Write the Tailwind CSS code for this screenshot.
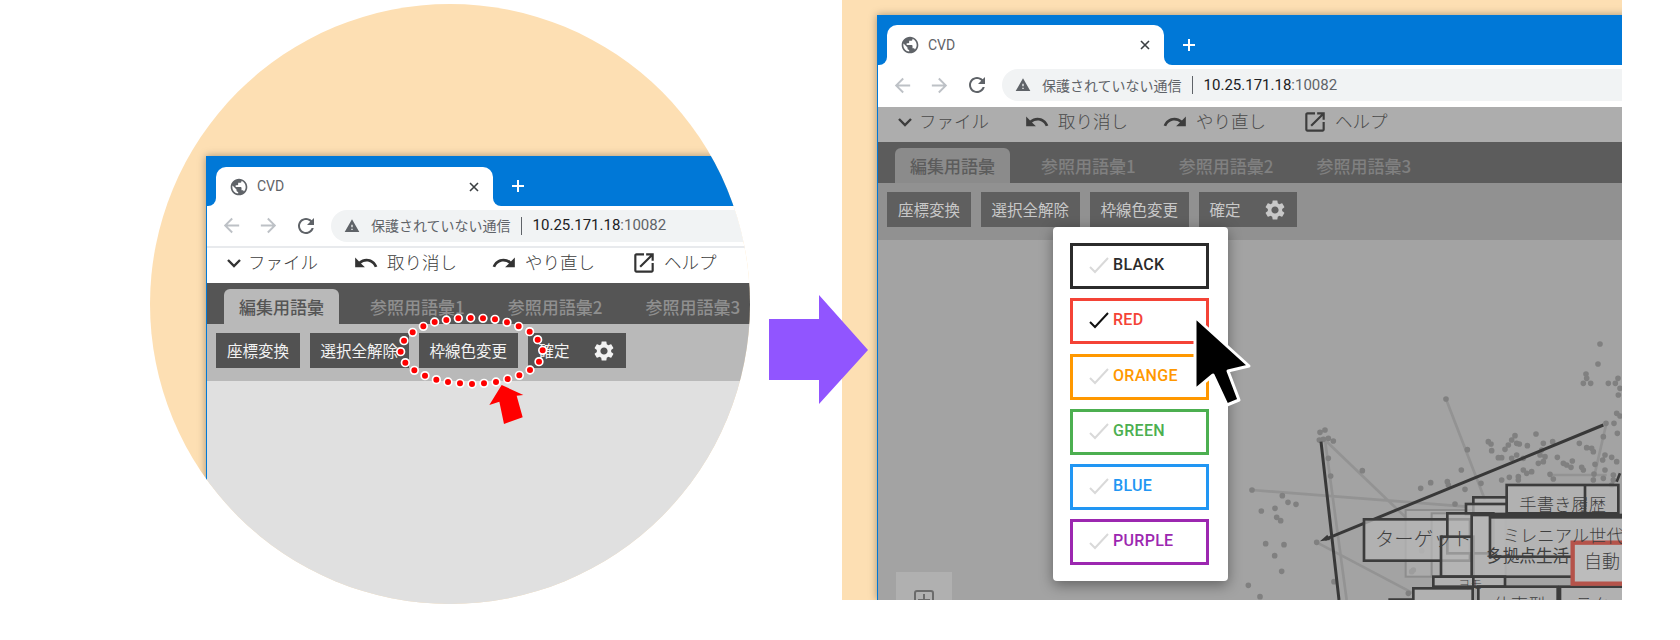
<!DOCTYPE html>
<html lang="ja">
<head>
<meta charset="UTF-8">
<title>CVD</title>
<script src="https://cdn.jsdelivr.net/npm/@tailwindcss/browser@4"></script>
</head>
<body class="bg-white">
<svg class="hidden">
  <symbol id="i-globe" viewBox="0 0 24 24"><path d="M12 2C6.48 2 2 6.48 2 12s4.48 10 10 10 10-4.48 10-10S17.52 2 12 2zm-1 17.93c-3.95-.49-7-3.85-7-7.93 0-.62.08-1.21.21-1.79L9 15v1c0 1.1.9 2 2 2v1.93zm6.9-2.54c-.26-.81-1-1.39-1.9-1.39h-1v-3c0-.55-.45-1-1-1H8v-2h2c.55 0 1-.45 1-1V7h2c1.1 0 2-.9 2-2v-.41c2.93 1.19 5 4.06 5 7.41 0 2.08-.8 3.97-2.1 5.39z"/></symbol>
  <symbol id="i-back" viewBox="0 0 24 24"><path d="M20 11H7.83l5.59-5.59L12 4l-8 8 8 8 1.41-1.41L7.83 13H20v-2z"/></symbol>
  <symbol id="i-forward" viewBox="0 0 24 24"><path d="M12 4l-1.41 1.41L16.17 11H4v2h12.17l-5.58 5.59L12 20l8-8z"/></symbol>
  <symbol id="i-reload" viewBox="0 0 24 24"><path d="M17.65 6.35C16.2 4.9 14.21 4 12 4c-4.42 0-7.99 3.58-7.99 8s3.57 8 7.99 8c3.73 0 6.84-2.55 7.73-6h-2.08c-.82 2.33-3.04 4-5.65 4-3.31 0-6-2.69-6-6s2.69-6 6-6c1.66 0 3.14.69 4.22 1.78L13 11h7V4l-2.35 2.35z"/></symbol>
  <symbol id="i-warn" viewBox="0 0 24 24"><path d="M1 21h22L12 2 1 21zm12-3h-2v-2h2v2zm0-4h-2v-4h2v4z"/></symbol>
  <symbol id="i-undo" viewBox="0 0 24 24"><path d="M12.5 8c-2.65 0-5.05.99-6.9 2.6L2 7v9h9l-3.62-3.62c1.39-1.16 3.16-1.88 5.12-1.88 3.54 0 6.55 2.31 7.6 5.5l2.37-.78C21.08 11.03 17.15 8 12.5 8z"/></symbol>
  <symbol id="i-redo" viewBox="0 0 24 24"><path d="M18.4 10.6C16.55 8.99 14.15 8 11.5 8c-4.65 0-8.58 3.03-9.96 7.22L3.9 16c1.05-3.19 4.05-5.5 7.6-5.5 1.95 0 3.73.72 5.12 1.88L13 16h9V7l-3.6 3.6z"/></symbol>
  <symbol id="i-open" viewBox="0 0 24 24"><path d="M19 19H5V5h7V3H5c-1.11 0-2 .9-2 2v14c0 1.1.89 2 2 2h14c1.1 0 2-.9 2-2v-7h-2v7zM14 3v2h3.59l-9.83 9.83 1.41 1.41L19 6.41V10h2V3h-7z"/></symbol>
  <symbol id="i-gear" viewBox="0 0 24 24"><path d="M19.14 12.94c.04-.3.06-.61.06-.94 0-.32-.02-.64-.07-.94l2.03-1.58c.18-.14.23-.41.12-.61l-1.92-3.32c-.12-.22-.37-.29-.59-.22l-2.39.96c-.5-.38-1.03-.7-1.62-.94l-.36-2.54c-.04-.24-.24-.41-.48-.41h-3.84c-.24 0-.43.17-.47.41l-.36 2.54c-.59.24-1.13.57-1.62.94l-2.39-.96c-.22-.08-.47 0-.59.22L2.74 8.87c-.12.21-.08.47.12.61l2.03 1.58c-.05.3-.09.63-.09.94s.02.64.07.94l-2.03 1.58c-.18.14-.23.41-.12.61l1.92 3.32c.12.22.37.29.59.22l2.39-.96c.5.38 1.03.7 1.62.94l.36 2.54c.05.24.24.41.48.41h3.84c.24 0 .44-.17.47-.41l.36-2.54c.59-.24 1.13-.56 1.62-.94l2.39.96c.22.08.47 0 .59-.22l1.92-3.32c.12-.22.07-.47-.12-.61l-2.01-1.58zM12 15.6c-1.98 0-3.6-1.62-3.6-3.6s1.62-3.6 3.6-3.6 3.6 1.62 3.6 3.6-1.62 3.6-3.6 3.6z"/></symbol>
  <symbol id="i-check" viewBox="0 0 20 16"><path d="M1 10l5 5L19 1" fill="none" stroke="currentColor" stroke-width="2"/></symbol>
</svg>

<div class="relative w-[1680px] h-[640px] overflow-hidden font-['Noto_Sans_CJK_JP',sans-serif]">

  <!-- left: zoomed circle -->
  <div class="absolute left-[150px] top-[4px] size-[600px] [clip-path:circle(300px)] bg-[#fddfb3] pl-[56px] pt-[152px]">
    <div class="w-[800px] h-[448px] flex flex-col border-l border-[#0078d7] shadow-[0_0_8px_rgba(0,0,0,0.35)]">
      <div class="relative h-[50px] shrink-0 bg-[#0078d7]">
        <div class="absolute left-[9px] top-[11px] w-[277px] h-[39px] bg-white rounded-t-[10px] flex items-center pl-[13px] pr-[14px]">
          <div class="absolute -left-2 bottom-0 size-2 bg-white"><div class="size-2 bg-[#0078d7] rounded-br-lg"></div></div>
          <div class="absolute -right-2 bottom-0 size-2 bg-white"><div class="size-2 bg-[#0078d7] rounded-bl-lg"></div></div>
          <svg class="size-[20px] text-[#5f6368]" fill="currentColor"><use href="#i-globe"/></svg>
          <span class="ml-[8px] text-[14px] text-[#5f6368] font-['Roboto',sans-serif]">CVD</span>
          <svg class="ml-auto size-[10px] text-[#3c4043]" viewBox="0 0 10 10" fill="none" stroke="currentColor" stroke-width="1.6"><path d="M1 1l8 8M9 1l-8 8"/></svg>
        </div>
        <svg class="absolute left-[304px] top-[23px] size-[14px] text-white" viewBox="0 0 14 14" fill="none" stroke="currentColor" stroke-width="2"><path d="M7 1v12M1 7h12"/></svg>
      </div>
      <div class="h-[42px] shrink-0 bg-white border-b-2 border-[#e8eaed] flex items-center pl-[13px] pb-[1px]">
        <svg class="size-[23px] text-[#bdc1c6]" fill="currentColor"><use href="#i-back"/></svg>
        <svg class="ml-[14px] size-[23px] text-[#bdc1c6]" fill="currentColor"><use href="#i-forward"/></svg>
        <svg class="ml-[14px] size-[24px] text-[#5f6368]" fill="currentColor"><use href="#i-reload"/></svg>
        <div class="ml-[13px] h-[32px] flex-1 bg-[#f1f3f4] rounded-l-full flex items-center pl-[13px]">
          <svg class="size-[16px] text-[#5f6368]" fill="currentColor"><use href="#i-warn"/></svg>
          <span class="ml-[11px] text-[14px] text-[#5f6368]">保護されていない通信</span>
          <span class="ml-[10px] w-px h-[18px] bg-[#5f6368]"></span>
          <span class="ml-[11px] text-[15px] text-[#202124] font-['Roboto',sans-serif]">10.25.171.18<span class="text-[#5f6368]">:10082</span></span>
        </div>
      </div>
      <div class="h-[35px] shrink-0 bg-white flex items-center pb-[6px] text-[17.5px] text-[#3d3d3d] font-light">
        <svg class="ml-[18px] size-[18px] text-[#333]" viewBox="0 0 18 18" fill="none" stroke="currentColor" stroke-width="2.4"><path d="M3 6l6 6 6-6"/></svg>
        <span class="ml-[5px]">ファイル</span>
        <svg class="ml-[35px] size-[26px] text-[#333]" fill="currentColor"><use href="#i-undo"/></svg>
        <span class="ml-[8px]">取り消し</span>
        <svg class="ml-[34px] size-[26px] text-[#333]" fill="currentColor"><use href="#i-redo"/></svg>
        <span class="ml-[8px]">やり直し</span>
        <svg class="ml-[36px] size-[26px] text-[#333]" fill="currentColor"><use href="#i-open"/></svg>
        <span class="ml-[7px]">ヘルプ</span>
      </div>
      <div class="h-[41px] shrink-0 bg-[#555] flex items-end gap-[11px] pl-[17px] text-[17px] text-[#8f8f8f] font-medium">
        <div class="h-[35px] px-[15px] flex items-center bg-[#b9b9b9] rounded-t-md text-[#555] mr-[4px]">編集用語彙</div>
        <div class="h-[35px] px-4 flex items-center">参照用語彙1</div>
        <div class="h-[35px] px-4 flex items-center">参照用語彙2</div>
        <div class="h-[35px] px-4 flex items-center">参照用語彙3</div>
      </div>
      <div class="h-[57px] shrink-0 bg-[#b9b9b9] flex items-start gap-[9.5px] pl-[9px] pt-[9px] text-[15.5px] text-[#f2f2f2]">
        <div class="h-[35px] px-[11px] flex items-center bg-[#525252]">座標変換</div>
        <div class="h-[35px] px-[11px] flex items-center bg-[#525252]">選択全解除</div>
        <div class="h-[35px] px-[11px] flex items-center bg-[#525252]">枠線色変更</div>
        <div class="h-[35px] pl-[11px] pr-[10px] flex items-center bg-[#525252]">確定<svg class="ml-[22px] size-[24px] text-[#f2f2f2]" fill="currentColor"><use href="#i-gear"/></svg></div>
      </div>
      <div class="flex-1 bg-[#e0e0e0]"></div>
    </div>
  </div>

  <!-- dotted ring and red arrow -->
  <svg class="absolute left-[380px] top-[300px]" width="200" height="130" viewBox="0 0 600 390" stroke-linecap="round" fill="none">
    <path stroke="#fff" stroke-width="28" d="M62 155h0M72 122h0M98 97h0M130 79h0M164 66h0M199 60h0M235 55h0M272 54h0M309 55h0M345 58h0M381 67h0M416 79h0M449 95h0M473 119h0M488 151h0M477 185h0M450 210h0M418 226h0M383 237h0M348 246h0M312 250h0M276 252h0M240 250h0M204 246h0M169 239h0M135 227h0M103 211h0M76 188h0"/>
    <path stroke="#ff0000" stroke-width="18" d="M62 155h0M72 122h0M98 97h0M130 79h0M164 66h0M199 60h0M235 55h0M272 54h0M309 55h0M345 58h0M381 67h0M416 79h0M449 95h0M473 119h0M488 151h0M477 185h0M450 210h0M418 226h0M383 237h0M348 246h0M312 250h0M276 252h0M240 250h0M204 246h0M169 239h0M135 227h0M103 211h0M76 188h0"/>
    <polygon fill="#ff0000" points="365,255 328,315 358,305 372,372 428,352 410,287 430,285"/>
  </svg>

  <!-- purple arrow -->
  <svg class="absolute left-[769px] top-[295px] z-10" width="99" height="109" viewBox="0 0 99 109"><polygon fill="#9155ff" points="0,24 50,24 50,0 99,55 50,109 50,85 0,85"/></svg>

  <!-- right: browser with dialog -->
  <div class="absolute left-[842px] top-0 w-[780px] h-[600px] overflow-hidden bg-[#fddfb3] pl-[35px] pt-[15px]">
    <div class="w-[800px] h-[585px] flex flex-col border-l border-[#0078d7] shadow-[0_0_8px_rgba(0,0,0,0.35)]">
      <div class="relative h-[50px] shrink-0 bg-[#0078d7]">
        <div class="absolute left-[9px] top-[10px] w-[277px] h-[40px] bg-white rounded-t-[10px] flex items-center pl-[13px] pr-[14px]">
          <div class="absolute -left-2 bottom-0 size-2 bg-white"><div class="size-2 bg-[#0078d7] rounded-br-lg"></div></div>
          <div class="absolute -right-2 bottom-0 size-2 bg-white"><div class="size-2 bg-[#0078d7] rounded-bl-lg"></div></div>
          <svg class="size-[20px] text-[#5f6368]" fill="currentColor"><use href="#i-globe"/></svg>
          <span class="ml-[8px] text-[14px] text-[#5f6368] font-['Roboto',sans-serif]">CVD</span>
          <svg class="ml-auto size-[10px] text-[#3c4043]" viewBox="0 0 10 10" fill="none" stroke="currentColor" stroke-width="1.6"><path d="M1 1l8 8M9 1l-8 8"/></svg>
        </div>
        <svg class="absolute left-[304px] top-[23px] size-[14px] text-white" viewBox="0 0 14 14" fill="none" stroke="currentColor" stroke-width="2"><path d="M7 1v12M1 7h12"/></svg>
      </div>
      <div class="h-[42px] shrink-0 bg-white flex items-center pl-[13px] pb-[2px]">
        <svg class="size-[23px] text-[#bdc1c6]" fill="currentColor"><use href="#i-back"/></svg>
        <svg class="ml-[14px] size-[23px] text-[#bdc1c6]" fill="currentColor"><use href="#i-forward"/></svg>
        <svg class="ml-[14px] size-[24px] text-[#5f6368]" fill="currentColor"><use href="#i-reload"/></svg>
        <div class="ml-[13px] h-[32px] flex-1 bg-[#f1f3f4] rounded-l-full flex items-center pl-[13px]">
          <svg class="size-[16px] text-[#5f6368]" fill="currentColor"><use href="#i-warn"/></svg>
          <span class="ml-[11px] text-[14px] text-[#5f6368]">保護されていない通信</span>
          <span class="ml-[10px] w-px h-[18px] bg-[#5f6368]"></span>
          <span class="ml-[11px] text-[15px] text-[#202124] font-['Roboto',sans-serif]">10.25.171.18<span class="text-[#5f6368]">:10082</span></span>
        </div>
      </div>
      <div class="h-[35px] shrink-0 bg-[#adadad] flex items-center pb-[6px] text-[17.5px] text-[#4a4a4a] font-light">
        <svg class="ml-[18px] size-[18px] text-[#3d3d3d]" viewBox="0 0 18 18" fill="none" stroke="currentColor" stroke-width="2.4"><path d="M3 6l6 6 6-6"/></svg>
        <span class="ml-[5px]">ファイル</span>
        <svg class="ml-[35px] size-[26px] text-[#3d3d3d]" fill="currentColor"><use href="#i-undo"/></svg>
        <span class="ml-[8px]">取り消し</span>
        <svg class="ml-[34px] size-[26px] text-[#3d3d3d]" fill="currentColor"><use href="#i-redo"/></svg>
        <span class="ml-[8px]">やり直し</span>
        <svg class="ml-[36px] size-[26px] text-[#3d3d3d]" fill="currentColor"><use href="#i-open"/></svg>
        <span class="ml-[7px]">ヘルプ</span>
      </div>
      <div class="h-[41px] shrink-0 bg-[#5c5c5c] flex items-end gap-[11px] pl-[17px] text-[17px] text-[#808080] font-medium">
        <div class="h-[35px] px-[15px] flex items-center bg-[#8b8b8b] rounded-t-md text-[#5c5c5c] mr-[4px]">編集用語彙</div>
        <div class="h-[35px] px-4 flex items-center">参照用語彙1</div>
        <div class="h-[35px] px-4 flex items-center">参照用語彙2</div>
        <div class="h-[35px] px-4 flex items-center">参照用語彙3</div>
      </div>
      <div class="h-[57px] shrink-0 bg-[#919191] flex items-start gap-[9.5px] pl-[9px] pt-[9px] text-[15.5px] text-[#c8c8c8]">
        <div class="h-[35px] px-[11px] flex items-center bg-[#5f5f5f]">座標変換</div>
        <div class="h-[35px] px-[11px] flex items-center bg-[#5f5f5f]">選択全解除</div>
        <div class="h-[35px] px-[11px] flex items-center bg-[#5f5f5f]">枠線色変更</div>
        <div class="h-[35px] pl-[11px] pr-[10px] flex items-center bg-[#5f5f5f]">確定<svg class="ml-[22px] size-[24px] text-[#c8c8c8]" fill="currentColor"><use href="#i-gear"/></svg></div>
      </div>
      <div class="relative flex-1 bg-[#a3a3a3] overflow-hidden">
        <!-- graph: drawn at 3x so coordinates stay easy to read -->
        <svg class="absolute left-[362px] top-[140px] overflow-visible" width="384" height="220" viewBox="0 0 1152 660" fill="none">
          <g stroke="#939393" stroke-width="8">
            <path d="M255 180L320 660M255 180L500 415M36 330L680 380M618 57L735 360M230 487L520 640M1098 135L1060 300M930 285H1100"/>
          </g>
          <path stroke="#808080" stroke-width="17" stroke-linecap="round" d="M240 157h0M255 150h0M238 180h0M250 178h0M265 175h0M280 183h0M265 235h0M272 288h0M367 272h0M36 330h0M127 347h0M144 367h0M168 373h0M64 393h0M105 385h0M110 412h0M122 422h0M77 491h0M132 494h0M230 487h0M104 527h0M125 574h0M25 616h0M60 650h0M282 605h0M618 57h0M682 209h0M664 270h0M542 325h0M572 308h0M622 305h0M625 315h0M675 328h0M723 310h0M645 372h0M520 570h0M515 575h0M545 512h0M610 577h0M505 640h0M745 185h0M753 192h0M755 212h0M825 167h0M815 180h0M805 195h0M795 208h0M830 190h0M838 192h0M862 197h0M888 162h0M910 190h0M938 185h0M905 210h0M775 233h0M785 233h0M815 235h0M830 225h0M850 235h0M900 225h0M915 230h0M952 232h0M910 245h0M895 250h0M850 270h0M860 280h0M875 275h0M835 290h0M808 292h0M785 300h0M835 300h0M930 283h0M940 297h0M970 250h0M997 243h0M980 255h0M993 262h0M1025 262h0M1030 270h0M1018 190h0M1040 203h0M1055 205h0M1060 215h0M1095 225h0M1115 232h0M1130 245h0M1135 45h0M1140 25h0M1030 10h0M1105 10h0M1130 100h0M1140 108h0M1122 130h0M1098 130h0M1132 160h0M1090 170h0M1088 240h0M1065 253h0M1062 282h0M1095 270h0M1120 285h0M1090 295h0M1060 300h0M1120 300h0M1115 315h0M1080 -108h0M1074 -48h0M1038 -18h0M1040 -5h0M1052 10h0M1134 -5h0M1126 10h0"/>
          <path stroke="#383838" stroke-width="9" d="M243 185L297 660M1090 135L255 478"/>
          <polygon fill="#383838" points="240,484 262,464 270,480"/>
          <g stroke="#8d8d8d" stroke-width="6" fill="#b0b0b0" fill-opacity=".6">
            <rect x="497" y="390" width="300" height="200"/>
            <rect x="575" y="400" width="120" height="190"/>
          </g>
          <g stroke="#3c3c3c" stroke-width="8" fill="#b6b6b6" fill-opacity=".75">
            <rect x="800" y="315" width="335" height="85"/>
            <path d="M1035 315v85M1140 280l-10 25" fill="none"/>
            <rect x="700" y="352" width="100" height="50"/>
            <rect x="678" y="372" width="122" height="30"/>
            <rect x="372" y="418" width="318" height="124"/>
            <rect x="622" y="400" width="138" height="120"/>
            <rect x="603" y="470" width="97" height="120"/>
            <rect x="695" y="405" width="460" height="185"/>
            <rect x="750" y="412" width="410" height="118"/>
            <rect x="580" y="590" width="215" height="30"/>
            <rect x="520" y="625" width="178" height="60"/>
            <rect x="715" y="620" width="238" height="60"/>
            <rect x="960" y="620" width="200" height="60"/>
            <path d="M445 659H520M700 590V620" fill="none"/>
          </g>
          <rect x="998" y="488" width="170" height="123" fill="#bcbcbc" stroke="#b5534a" stroke-width="13"/>
          <g fill="#3f3f3f" font-weight="300" font-family="'Noto Sans CJK JP',sans-serif">
            <text x="838" y="392" font-size="52">手書き履歴</text>
            <text x="405" y="497" font-size="58">ターゲット</text>
            <text x="788" y="486" font-size="52">ミレニアル世代</text>
            <text x="738" y="545" font-size="50" font-weight="400">多拠点生活</text>
            <text x="1032" y="565" font-size="54">自動</text>
            <text x="655" y="628" font-size="36">ヨモ</text>
            <text x="760" y="692" font-size="52">仕事型</text>
            <text x="1005" y="692" font-size="52">テク</text>
          </g>
        </svg>
        <div class="absolute left-[18px] top-[332px] size-[56px] bg-[#b0b0b0] flex justify-center pt-[18px]">
          <div class="size-[20px] rounded-[3px] border-2 border-[#6b6b6b] flex items-center justify-center text-[#6b6b6b]">
            <svg class="size-[14px]" viewBox="0 0 14 14" fill="none" stroke="currentColor" stroke-width="2"><path d="M7 1v12M1 7h12"/></svg>
          </div>
        </div>
      </div>
    </div>

    <!-- colour dialog -->
    <div class="absolute left-[211px] top-[227px] w-[175px] h-[354px] bg-white rounded-[4px] shadow-[0_4px_14px_rgba(0,0,0,0.4)] pl-[17px] pt-[16px] flex flex-col gap-[9.3px] text-[16px] tracking-[0.3px] font-medium font-['Roboto',sans-serif]">
      <div class="w-[139px] h-[46px] shrink-0 border-[3px] border-[#2b2b2b] text-[#2b2b2b] flex items-center pl-[16px] pb-[2px]"><svg class="size-[20px] text-[#d9d9d9]"><use href="#i-check"/></svg><span class="ml-[4px]">BLACK</span></div>
      <div class="w-[139px] h-[46px] shrink-0 border-[3px] border-[#f44336] text-[#f44336] flex items-center pl-[16px] pb-[2px]"><svg class="size-[20px] text-[#111]"><use href="#i-check"/></svg><span class="ml-[4px]">RED</span></div>
      <div class="w-[139px] h-[46px] shrink-0 border-[3px] border-[#ff9800] text-[#ff9800] flex items-center pl-[16px] pb-[2px]"><svg class="size-[20px] text-[#d9d9d9]"><use href="#i-check"/></svg><span class="ml-[4px]">ORANGE</span></div>
      <div class="w-[139px] h-[46px] shrink-0 border-[3px] border-[#4caf50] text-[#4caf50] flex items-center pl-[16px] pb-[2px]"><svg class="size-[20px] text-[#d9d9d9]"><use href="#i-check"/></svg><span class="ml-[4px]">GREEN</span></div>
      <div class="w-[139px] h-[46px] shrink-0 border-[3px] border-[#2196f3] text-[#2196f3] flex items-center pl-[16px] pb-[2px]"><svg class="size-[20px] text-[#d9d9d9]"><use href="#i-check"/></svg><span class="ml-[4px]">BLUE</span></div>
      <div class="w-[139px] h-[46px] shrink-0 border-[3px] border-[#9c27b0] text-[#9c27b0] flex items-center pl-[16px] pb-[2px]"><svg class="size-[20px] text-[#d9d9d9]"><use href="#i-check"/></svg><span class="ml-[4px]">PURPLE</span></div>
    </div>

    <!-- mouse pointer -->
    <svg class="absolute left-[350px] top-[315px]" width="60" height="92" viewBox="0 0 60 92"><polygon points="3,2 57,51 36,56 47,85 35,90 21,60 3,75" fill="#000" stroke="#fff" stroke-width="3" stroke-linejoin="round"/></svg>
  </div>
</div>
</body>
</html>
